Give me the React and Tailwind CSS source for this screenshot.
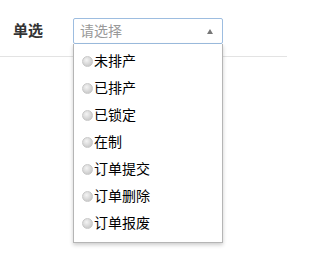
import React from "react";

const options = ["未排产", "已排产", "已锁定", "在制", "订单提交", "订单删除", "订单报废"];

const Radio = () => (
  <span className="block w-[11px] h-[11px] rounded-full shrink-0 bg-[radial-gradient(circle_at_40%_35%,#f4f4f4_0%,#d6d6d6_55%,#bcbcbc_100%)] border border-[#c8c8c8]" />
);

const App = () => {
  return (
    <div className="w-[287px] h-[275px] bg-white font-['Liberation_Sans','Noto_Sans_CJK_SC',sans-serif] text-[#333]">
      <div className="flex items-start pt-[18px] h-[57px] border-b border-[#e3e3e3]">
        <div className="w-[73px] pl-[13px] h-[26px] flex items-center text-[15px] font-bold text-[#333]">单选</div>
        <div className="relative w-[150px]">
          <div className="h-[26px] border border-[#9dbde0] rounded-[2px] flex items-center justify-between pl-[6px] pr-[9px] bg-white">
            <span className="text-[14px] text-[#999]">请选择</span>
            <span className="w-0 h-0 border-x-[3px] border-x-transparent border-b-[5px] border-b-[#777]" />
          </div>
          <ul className="absolute left-0 top-full w-[150px] bg-white border border-t-0 border-[#b5b5b5] shadow-[0_2px_4px_rgba(0,0,0,0.2)] pt-[4px] pb-[5px] z-10">
            {options.map((o) => (
              <li key={o} className="h-[27px] flex items-center pl-[8px] gap-[1px] text-[14px] text-[#000]">
                <Radio />
                <span>{o}</span>
              </li>
            ))}
          </ul>
        </div>
      </div>
    </div>
  );
};

export default App;
